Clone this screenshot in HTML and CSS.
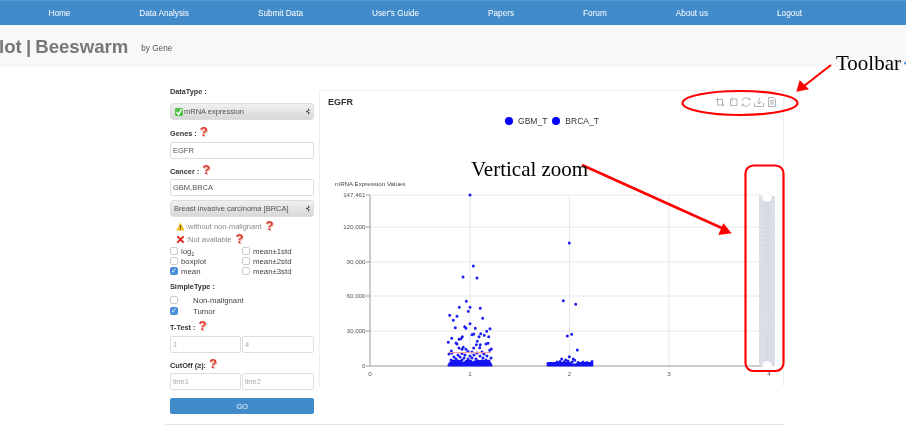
FILE: index.html
```html
<!DOCTYPE html>
<html>
<head>
    <title>Plot | Beeswarm</title>
    <link rel="stylesheet" href="styles.css">
</head>
<body>
<div id="page">
    <nav class="topnav">
        <a>Home</a>
        <a>Data Analysis</a>
        <a>Submit Data</a>
        <a>User's Guide</a>
        <a>Papers</a>
        <a>Forum</a>
        <a>About us</a>
        <a>Logout</a>
    </nav>

    <header class="banner">
        <h1>lot | Beeswarm</h1>
        <small>by Gene</small>
    </header>

    <div class="content">
        <form class="sidebar">
            <label class="field-label">DataType :</label>
            <div class="select-box mt6">
                <svg class="ok-icon" viewBox="0 0 10 10"><rect width="10" height="10" rx="1.500" fill="#4fc04a"/><path d="M2 5l2.400 3L8.500 1.500" fill="none" stroke="#fff" stroke-width="1.800"/></svg>
                <span>mRNA expression</span>
            </div>

            <label class="field-label mt7">Genes : <span class="help">?</span></label>
            <input class="text-input mt5" type="text" value="EGFR">

            <label class="field-label mt6">Cancer : <span class="help">?</span></label>
            <input class="text-input mt4" type="text" value="GBM,BRCA">
            <div class="select-box mt4"><span>Breast invasive carcinoma [BRCA]</span></div>

            <div class="note mt4">
                <svg class="note-icon" viewBox="0 0 10 10"><path d="M5 .5L9.800 9.500H.2z" fill="#f0c020"/><path d="M5 3.500v3M5 7.400v1.200" stroke="#333" stroke-width="1"/></svg>
                <span>:without non-malignant</span> <span class="help">?</span>
            </div>
            <div class="note mt3">
                <svg class="note-icon" viewBox="0 0 10 10"><path d="M1.500 1.500l7 7M8.500 1.500l-7 7" stroke="#e0201c" stroke-width="2.200"/></svg>
                <span>:Not available</span> <span class="help">?</span>
            </div>

            <div class="check-grid">
                <label><input type="checkbox">log<sub>2</sub></label>
                <label><input type="checkbox">mean±1std</label>
                <label><input type="checkbox">boxplot</label>
                <label><input type="checkbox">mean±2std</label>
                <label><input type="checkbox" checked>mean</label>
                <label><input type="checkbox">mean±3std</label>
            </div>

            <label class="field-label mt6">SimpleType :</label>
            <label class="wide-check mt3"><input type="checkbox">Non-malignant</label>
            <label class="wide-check mt1"><input type="checkbox" checked>Tumor</label>

            <label class="field-label mt5">T-Test : <span class="help">?</span></label>
            <div class="input-pair mt5">
                <input class="text-input" type="text" placeholder="1">
                <input class="text-input" type="text" placeholder="4">
            </div>

            <label class="field-label mt6">CutOff (≥): <span class="help">?</span></label>
            <div class="input-pair mt4">
                <input class="text-input" type="text" placeholder="line1">
                <input class="text-input" type="text" placeholder="line2">
            </div>

            <button class="go-btn" type="button">GO</button>
        </form>

        <section class="panel">
            <div class="panel-head">
                <h2>EGFR</h2>
                <div class="toolbox">
                    <svg viewBox="0 0 10 10"><path d="M2.500 .5v7.500h7M.5 2.500h7v7"/></svg>
                    <svg viewBox="0 0 10 10"><path d="M2.500 2.500v6h6.500v-6.500h-6M4.500 .5L2.500 2.500 4.500 4"/></svg>
                    <svg viewBox="0 0 10 10"><path d="M1 4a4.200 4.200 0 0 1 7.500-1.500M9 6a4.200 4.200 0 0 1-7.500 1.500M8.800 .8v2H6.800M1.200 9.200v-2h2"/></svg>
                    <svg viewBox="0 0 10 10"><path d="M.5 6v3.500h9V6M5 .5v6.500M2.500 4.500L5 7l2.500-2.500"/></svg>
                    <svg viewBox="0 0 10 10"><path d="M1.500 .5h5l2 2v7h-7zM3 3.500h4M3 5.200h4M3 7h4"/></svg>
                </div>
            </div>
            <div class="legend">
                <span class="legend-dot"></span>GBM_T
                <span class="legend-dot second"></span>BRCA_T
            </div>

            <!-- viewBox uses page coordinates so the points are easy to read off -->
            <svg class="chart" viewBox="320 129 463 257">
                <g class="grid">
                    <path d="M370 195H769M370 227H769M370 262H769M370 296H769M370 331H769"/>
                    <path d="M470 195V366M569.500 195V366M669 195V366M769 195V366"/>
                </g>
                <path class="axis" d="M370 195V366H769"/>
                <path class="axis" d="M366 195h4M366 227h4M366 262h4M366 296h4M366 331h4M366 366h4"/>

                <g class="tick-y">
                    <text x="365.500" y="197.300">147,461</text>
                    <text x="365.500" y="229.300">120,000</text>
                    <text x="365.500" y="264.300">90,000</text>
                    <text x="365.500" y="298.300">60,000</text>
                    <text x="365.500" y="333.300">30,000</text>
                    <text x="365.500" y="368.300">0</text>
                </g>
                <g class="tick-x">
                    <text x="370" y="375.500">0</text>
                    <text x="470" y="375.500">1</text>
                    <text x="569.500" y="375.500">2</text>
                    <text x="669" y="375.500">3</text>
                    <text x="769" y="375.500">4</text>
                </g>
                <text class="axis-name" x="335" y="186">mRNA Expression Values</text>

                <!-- GBM_T points -->
                <path class="points" d="M470 195h0M473.300 266h0M463 277h0M477 278h0M466.300 301.300h0M459.300 307.300h0M470 307.300h0M480.300 308.300h0M468.300 311.300h0M449.700 315.300h0M457 316.300h0M453.300 320.300h0M482.700 318.300h0M470 323.700h0M464.700 326.700h0M466 328.300h0M455.300 327.700h0M475.300 328.300h0M490 328.700h0M486.700 331.300h0M480.700 333.700h0M473.700 334h0M472 334.700h0M462.300 336.700h0M479 336.700h0M488.700 336.700h0M484.300 335.300h0M451.700 338.300h0M459 339.300h0M461 338.700h0M477.300 341.300h0M448.300 342.300h0M456 343h0M457 344h0M488 343.300h0M486 344h0M480.300 344.700h0M476.300 344.700h0M459 348h0M463.300 347.300h0M462 349.300h0M466 349.300h0M473.700 348h0M479.700 347.700h0M491.300 349h0M489.700 350.300h0M451.300 351h0M449 354h0M452 353h0M468 351.500h0M472 352h0M477 353h0M482 352h0M484 354h0M487 356h0M458 355h0M462 353.500h0M465 355h0M470 356h0M474 355h0M480 356h0M491 358h0M454 357h0M456 359h0M460 357h0M464 358h0M468 359h0M472 358h0M476 359h0M483 358h0M486 360h0M489 361h0M451 360h0M453 361h0M458 361h0M462 360h0M466 362h0M470 361h0M474 362h0M478 361h0M482 361h0M485 362h0"/>
                <path class="band" d="M449 365H491M450 363.300H490M452 361.500H461M466 361.500H471M476 361.500H488"/>
                <path class="mean-line" d="M449 352.500H491"/>

                <!-- BRCA_T points -->
                <path class="points" d="M569.300 243h0M563.300 300.700h0M575.700 304.300h0M571.700 334.300h0M567.300 336h0M577.300 350h0M569.300 356.700h0M561.700 359h0M565.700 360h0M573.300 359h0M574.700 360.300h0M557 362h0M560 361.500h0M564 362h0M568 361h0M572 362h0M578 362.500h0M583 362h0M587 362.500h0M592 361.500h0"/>
                <path class="band" d="M548 365H592M548 363.500H570M578 363.500H592"/>

                <!-- vertical zoom slider -->
                <rect class="slider" x="759" y="196" width="16" height="170"/>
                <path class="slider-trace" d="M763 200h8M764 203h6M762 206h9M764 209h7M763 212h6M764 215h7M762 218h8M763 221h7M764 224h6M763 228h8M764 232h6M765 236h5M764 240h6M765 245h5M765 250h5M765 256h4M765 262h4M765 268h4M766 275h3M766 282h3M766 290h3M766 298h3M766 306h3M766 320h3M767 334V366"/>
                <circle class="slider-handle" cx="767" cy="197" r="5"/>
                <circle class="slider-handle" cx="767" cy="366" r="5"/>
            </svg>
        </section>
    </div>

    <hr class="foot-rule">

    <!-- red notes drawn over the screenshot -->
    <svg class="marks" viewBox="0 0 906 427">
        <ellipse cx="740" cy="103" rx="57.500" ry="12"/>
        <rect x="745.500" y="165.500" width="38" height="205.500" rx="8"/>
        <path d="M831 65L804 86"/>
        <path class="head" d="M796.300 91.700L799.700 80L809 89.300z"/>
        <path class="thick" d="M582 165L724 229"/>
        <path class="head" d="M731.700 233.300L718.300 235L723.300 223.300z"/>
        <circle class="speck" cx="905.500" cy="63" r="1.500"/>
    </svg>
    <span class="note-text toolbar-note">Toolbar</span>
    <span class="note-text zoom-note">Vertical zoom</span>
</div>
</body>
</html>
```

FILE: styles.css
```css
html, body {
    margin: 0;
    height: 100%;
    overflow: hidden;
    background-color: #fff;
}

#page {
    position: relative;
    width: 906px;
    height: 427px;
    overflow: hidden;
    font-family: "Liberation Sans", Arial, sans-serif;
    color: #333;
    filter: blur(0.4px);
}

.mt1 { margin-top: 1px; }
.mt3 { margin-top: 3px; }
.mt4 { margin-top: 4px; }
.mt5 { margin-top: 5px; }
.mt6 { margin-top: 6px; }
.mt7 { margin-top: 7px; }

.topnav {
    display: flex;
    height: 25px;
    padding-left: 14px;
    align-items: center;
    background-color: #428bca;
    border-top: 1px solid #5a9bd2;
    box-sizing: border-box;
}

.topnav a {
    padding: 0 34.5px;
    font-size: 8.2px;
    color: #fff;
}

.banner {
    display: flex;
    align-items: center;
    height: 42px;
    background-color: #f8f8f8;
}

.banner h1 {
    margin: 1px 0 0 -1px;
    font-size: 18.6px;
    font-weight: bold;
    word-spacing: -1px;
    color: #777;
}

.banner small {
    margin: 5px 0 0 13px;
    font-size: 8.2px;
    color: #555;
}

.content {
    display: flex;
    align-items: flex-start;
    margin-left: 170px;
    padding-top: 20px;
}

.sidebar {
    display: flex;
    flex-direction: column;
    width: 144px;
    font-size: 7.8px;
}

.field-label {
    display: block;
    height: 10px;
    line-height: 10px;
    font-size: 7.3px;
    font-weight: bold;
}

.help {
    margin-left: 1px;
    font-size: 13px;
    line-height: 10px;
    font-weight: bold;
    color: #e0332c;
    text-shadow: 1px 1px 0 #e8b8a8;
}

.select-box {
    position: relative;
    display: flex;
    align-items: center;
    height: 17px;
    padding-left: 3px;
    box-sizing: border-box;
    border: 1px solid #ddd;
    border-radius: 3px;
    background: linear-gradient(#f0f0f0, #d8d8d8);
    font-size: 7.5px;
    color: #555;
}

.select-box::after {
    content: "";
    position: absolute;
    right: 3px;
    top: 4px;
    height: 7px;
    width: 4px;
    background-color: #444;
    clip-path: polygon(50% 0, 100% 40%, 0 40%, 0 60%, 100% 60%, 50% 100%);
}

.ok-icon {
    width: 8px;
    height: 8px;
    margin: 0 1px;
}

.text-input {
    display: block;
    width: 100%;
    height: 17px;
    padding: 0 2px;
    box-sizing: border-box;
    border: 1px solid #ddd;
    border-radius: 2px;
    background-color: #fff;
    font-family: inherit;
    font-size: 7.5px;
    color: #555;
}

.text-input::placeholder {
    color: #aaa;
    opacity: 1;
}

.note {
    display: flex;
    align-items: center;
    gap: 1px;
    height: 10px;
    padding-left: 6px;
    font-size: 7.5px;
    color: #888;
}

.note .help {
    margin-left: 3px;
}

.note-icon {
    width: 9px;
    height: 9px;
}

.check-grid {
    display: grid;
    grid-template-columns: 72px 72px;
    grid-auto-rows: 10px;
    margin-top: 2px;
}

.check-grid label,
.wide-check {
    display: flex;
    align-items: center;
    height: 10px;
    color: #444;
}

.check-grid sub {
    font-size: 5px;
    line-height: 0;
    align-self: flex-end;
    margin-bottom: 2px;
}

.sidebar input[type="checkbox"] {
    appearance: none;
    position: relative;
    width: 8px;
    height: 8px;
    margin: 0 3px 0 0;
    border: 1px solid #ccc;
    border-radius: 2px;
    background-color: #fff;
    box-sizing: border-box;
}

.sidebar input[type="checkbox"]:checked {
    border-color: #4a90d9;
    background-color: #4a90d9;
}

.sidebar input[type="checkbox"]:checked::after {
    content: "✓";
    position: absolute;
    left: 0;
    top: -1px;
    font: 7px/8px "DejaVu Sans", sans-serif;
    color: #fff;
}

.sidebar .wide-check input[type="checkbox"] {
    margin-right: 15px;
}

.input-pair {
    display: grid;
    grid-template-columns: 71px 72px;
    gap: 1px;
}

.go-btn {
    height: 16px;
    margin-top: 8px;
    border: none;
    border-radius: 2px;
    background-color: #428bca;
    color: #e8f0f8;
    font-family: inherit;
    font-size: 7.5px;
}

.panel {
    width: 465px;
    height: 296px;
    margin: 3px 0 0 5px;
    box-sizing: border-box;
    border: 1px solid #eee;
    border-bottom: none;
}

.panel-head {
    display: flex;
    justify-content: space-between;
    align-items: center;
    height: 22px;
    padding: 0 6px 0 8px;
}

.panel-head h2 {
    margin: 0;
    font-size: 9px;
    font-weight: bold;
    color: #333;
}

.toolbox {
    display: flex;
    gap: 3px;
}

.toolbox svg {
    width: 10px;
    height: 10px;
    fill: none;
    stroke: #aaa;
    stroke-width: 0.9;
}

.legend {
    display: flex;
    align-items: center;
    justify-content: center;
    height: 16px;
    padding-left: 1px;
    font-size: 8.5px;
    color: #333;
}

.legend-dot {
    width: 8px;
    height: 8px;
    margin-right: 5px;
    border-radius: 50%;
    background-color: #00f;
}

.legend-dot.second {
    margin-left: 5px;
}

.chart {
    display: block;
    width: 463px;
    height: 257px;
}

.grid path {
    fill: none;
    stroke: #e8e8e8;
    stroke-width: 1;
}

.axis {
    fill: none;
    stroke: #999;
    stroke-width: 1;
}

.tick-y text {
    font-size: 6.2px;
    text-anchor: end;
    fill: #555;
}

.tick-x text {
    font-size: 6.2px;
    text-anchor: middle;
    fill: #555;
}

.axis-name {
    font-size: 6.2px;
    fill: #444;
}

.mean-line {
    stroke: #f79a9a;
    stroke-width: 1;
}

.points {
    fill: none;
    stroke: #1c1cf5;
    stroke-width: 3;
    stroke-linecap: round;
}

.band {
    fill: none;
    stroke: #1414f0;
    stroke-width: 3;
    stroke-linecap: round;
}

.slider {
    fill: #d9dee7;
}

.slider-trace {
    fill: none;
    stroke: #ccd2dc;
    stroke-width: 1;
}

.slider-handle {
    fill: #fff;
    stroke: #e8e8e8;
    stroke-width: 0.5;
}

.foot-rule {
    width: 619px;
    height: 1px;
    margin: 10px 0 0 165px;
    border: none;
    background-color: #e4e4e4;
}

.marks {
    position: absolute;
    left: 0;
    top: 0;
    width: 906px;
    height: 427px;
    fill: none;
    stroke: #f00;
    stroke-width: 2.2;
}

.marks .thick {
    stroke-width: 2.6;
}

.marks .head {
    fill: #f00;
    stroke: none;
}

.marks .speck {
    fill: #4a9be0;
    stroke: none;
}

.note-text {
    position: absolute;
    font-family: "Liberation Serif", "Times New Roman", serif;
    font-size: 21px;
    line-height: 24px;
    color: #000;
    white-space: nowrap;
}

.toolbar-note {
    left: 836px;
    top: 51px;
}

.zoom-note {
    left: 471px;
    top: 157px;
}
```
